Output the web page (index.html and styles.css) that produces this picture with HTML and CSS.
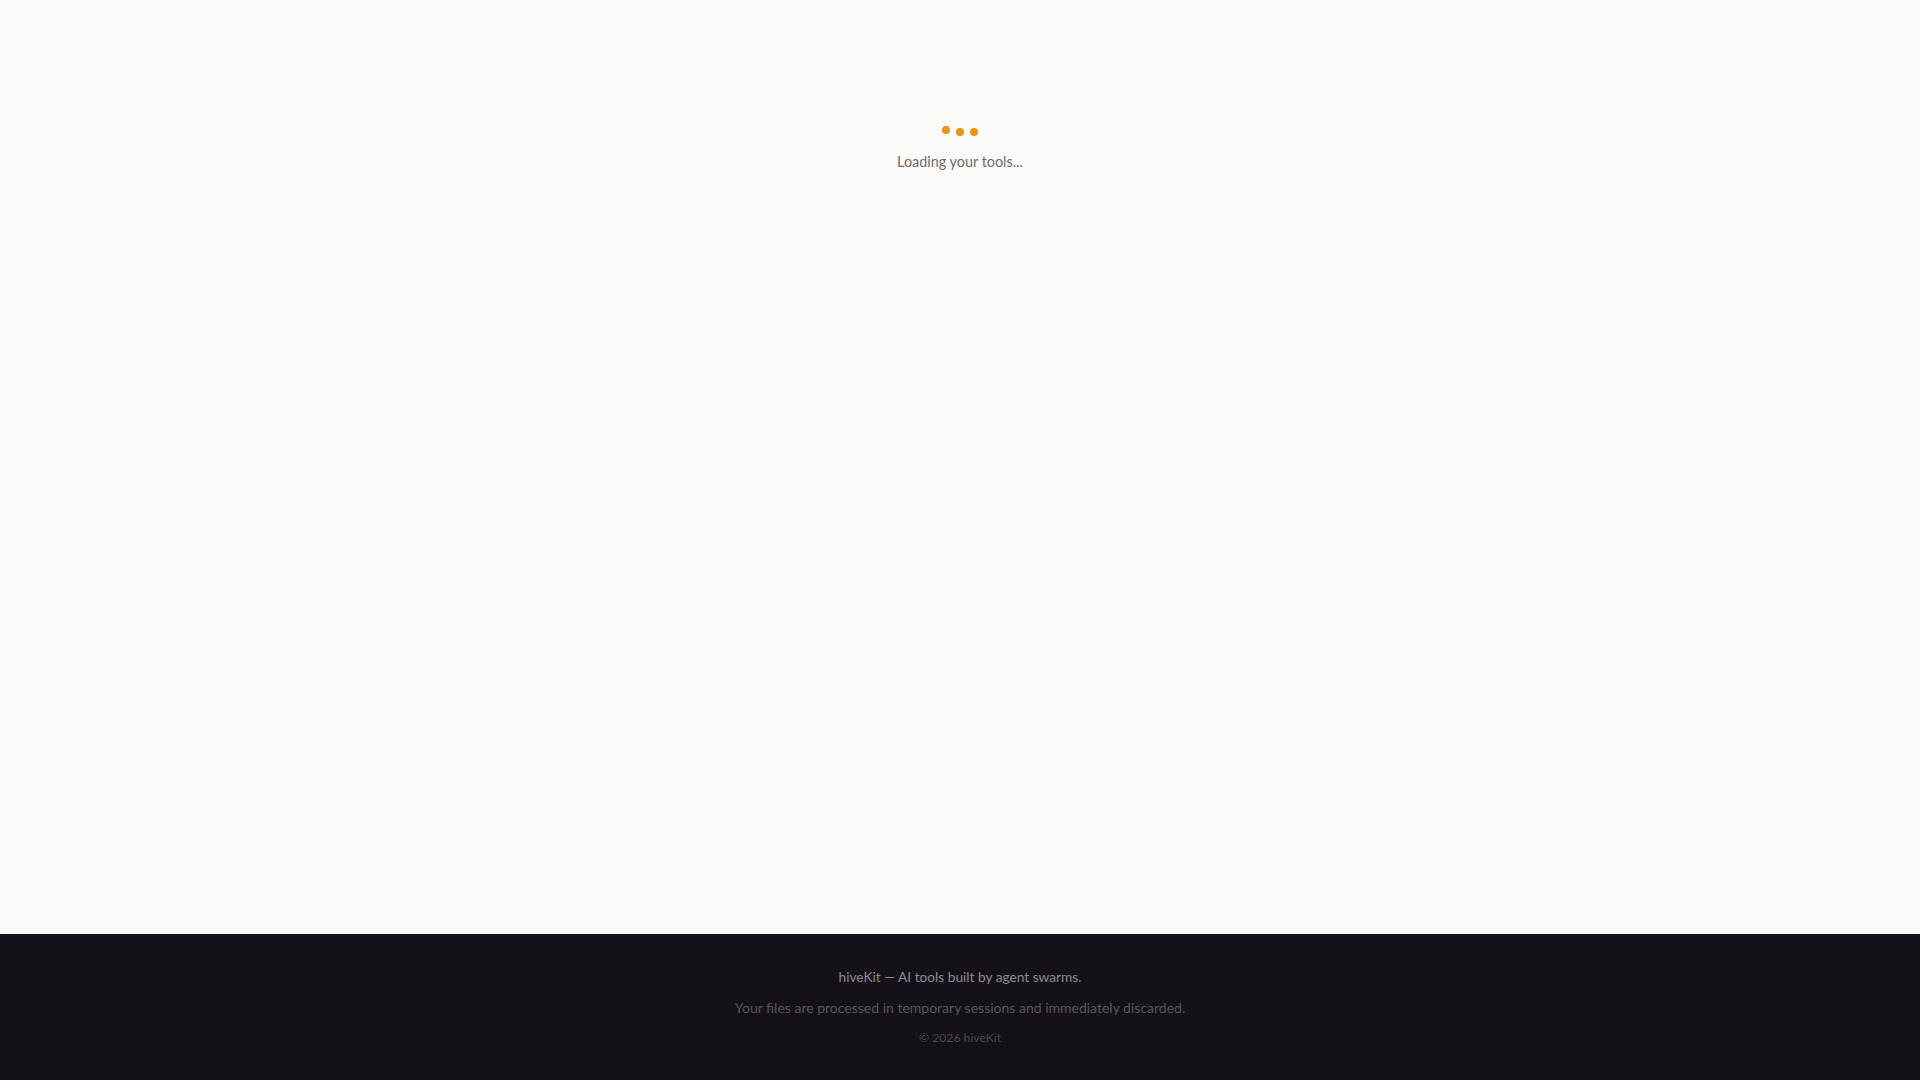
FILE: index.html
```html
<!DOCTYPE html>
<html lang="en">
<head>
<meta charset="utf-8">
<title>hiveKit</title>
<link rel="stylesheet" href="styles.css">
</head>
<body>
<div class="page">
  <main class="main">
    <div class="loader">
      <div class="dots">
        <span class="dot dot-up"></span>
        <span class="dot"></span>
        <span class="dot"></span>
      </div>
      <p class="loading-text">Loading your tools...</p>
    </div>
  </main>
  <footer class="footer">
    <p class="footer-line footer-main">hiveKit — AI tools built by agent swarms.</p>
    <p class="footer-line footer-sub">Your files are processed in temporary sessions and immediately discarded.</p>
    <p class="footer-line footer-copy">© 2026 hiveKit</p>
  </footer>
</div>
</body>
</html>
```

FILE: styles.css
```css
html, body {
  margin: 0;
  padding: 0;
}
body {
  background: #fafaf9;
  font-family: Lato, "Noto Sans", "Liberation Sans", sans-serif;
}
.page {
  min-height: 100vh;
  display: flex;
  flex-direction: column;
}
.main {
  flex: 1;
  display: flex;
  justify-content: center;
  padding-top: 126px;
}
.loader {
  display: flex;
  flex-direction: column;
  align-items: center;
}
.dots {
  display: flex;
  align-items: flex-end;
  gap: 6px;
  height: 10px;
}
.dot {
  width: 8px;
  height: 8px;
  border-radius: 50%;
  background: #e8950c;
}
.dot-up {
  margin-bottom: 2px;
}
.loading-text {
  margin: 16px 0 0;
  font-size: 14.4px;
  line-height: 20px;
  color: #6f6d6b;
}
.footer {
  background: #141218;
  padding: 33px 16px 34px;
  display: flex;
  flex-direction: column;
  align-items: center;
}
.footer-line {
  margin: 0;
  text-align: center;
}
.footer-main {
  font-size: 13.7px;
  line-height: 20px;
  color: #8c8a91;
}
.footer-sub {
  margin-top: 11px;
  font-size: 14px;
  line-height: 20px;
  color: #58565d;
}
.footer-copy {
  margin-top: 12px;
  font-size: 12.2px;
  line-height: 16px;
  color: #4a4850;
}
```
